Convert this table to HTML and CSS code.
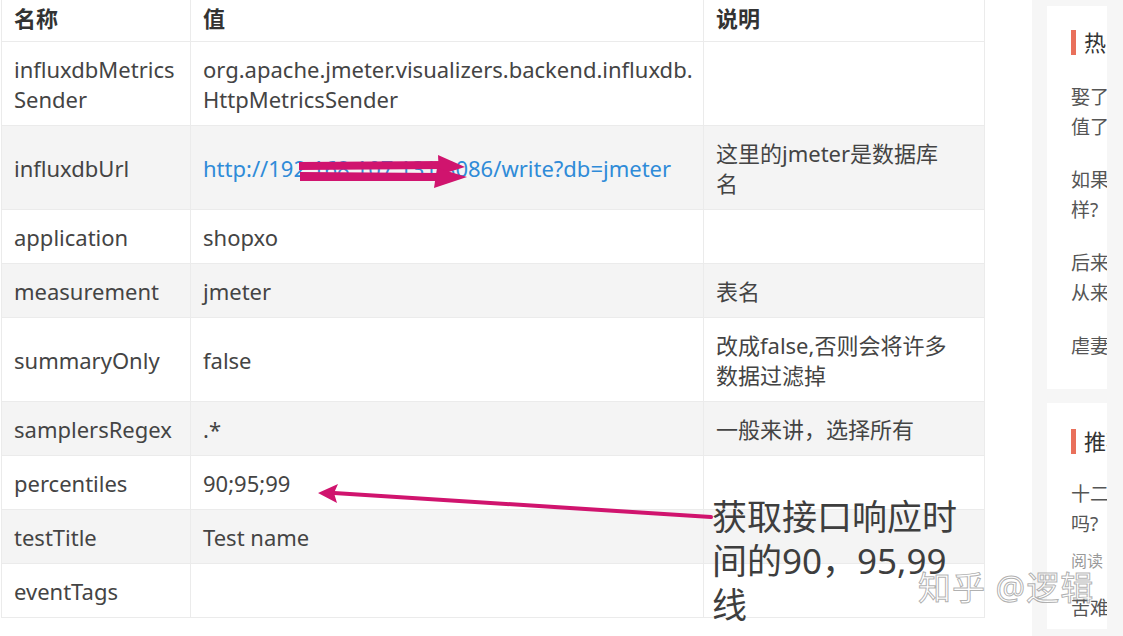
FILE: index.html
```html
<!DOCTYPE html>
<html lang="zh-CN">
<head>
<meta charset="utf-8">
<title>Backend Listener 参数</title>
<link rel="stylesheet" href="styles.css">
</head>
<body>
<div class="page">
  <main class="main">
    <table class="tbl">
      <colgroup><col class="c1"><col class="c2"><col class="c3"></colgroup>
      <thead>
        <tr><th>名称</th><th>值</th><th>说明</th></tr>
      </thead>
      <tbody>
        <tr><td>influxdbMetrics<br>Sender</td><td>org.apache.jmeter.visualizers.backend.influxdb.<br>HttpMetricsSender</td><td></td></tr>
        <tr><td>influxdbUrl</td><td><a class="link" href="#">http://192.168.107.131:8086/write?db=jmeter</a></td><td>这里的jmeter是数据库<br>名</td></tr>
        <tr><td>application</td><td>shopxo</td><td></td></tr>
        <tr><td>measurement</td><td>jmeter</td><td>表名</td></tr>
        <tr><td>summaryOnly</td><td>false</td><td>改成false,否则会将许多<br>数据过滤掉</td></tr>
        <tr><td>samplersRegex</td><td>.*</td><td>一般来讲，选择所有</td></tr>
        <tr><td>percentiles</td><td>90;95;99</td><td></td></tr>
        <tr><td>testTitle</td><td>Test name</td><td></td></tr>
        <tr><td>eventTags</td><td></td><td></td></tr>
      </tbody>
    </table>
    <svg class="marks" width="1032" height="636" viewBox="0 0 1032 636">
      <g fill="#d0146e">
        <polygon points="299,162 444,161 444,169 299,170"/>
        <polygon points="300,172 442,173 442,181 300,181"/>
        <polygon points="438,155 465,167 439,175"/>
        <polygon points="437,168 467,177 434,188"/>
        <polygon points="318,493 338,484 334,493 337,503"/>
      </g>
      <line x1="334" y1="493" x2="711" y2="517" stroke="#d0146e" stroke-width="4" stroke-linecap="round"/>
    </svg>
    <div class="note">获取接口响应时<br>间的90，95,99<br>线</div>
  </main>
  <aside class="side">
    <section class="card card-hot">
      <h3 class="card-title"><span class="bar"></span>热门内容</h3>
      <p class="item first">娶了<br>值了</p>
      <p class="item">如果<br>样?</p>
      <p class="item">后来<br>从来</p>
      <p class="item">虐妻</p>
    </section>
    <section class="card card-rec">
      <h3 class="card-title"><span class="bar"></span>推荐阅读</h3>
      <p class="item first">十二<br>吗?</p>
      <p class="meta">阅读</p>
      <p class="item next">苦难</p>
    </section>
  </aside>
  <div class="wm">知乎 @逻辑</div>
</div>
</body>
</html>
```

FILE: styles.css
```css
* { box-sizing: border-box; }
html, body { margin: 0; padding: 0; }
body {
  background: #f6f6f6;
  font-family: "Noto Sans", "Noto Sans CJK SC", sans-serif;
  color: #444;
}
.page {
  position: relative;
  display: flex;
  width: 1123px;
  height: 636px;
  overflow: hidden;
}
.main {
  position: relative;
  flex: none;
  width: 1032px;
  background: #fff;
  padding-left: 1px;
}
.tbl {
  border-collapse: collapse;
  table-layout: fixed;
  width: 983px;
  font-size: 22px;
  line-height: 30px;
}
.c1 { width: 189px; }
.c2 { width: 513px; }
.c3 { width: 281px; }
.tbl th, .tbl td {
  border: 1px solid #ebebeb;
  padding: 12px 12px 11px;
  text-align: left;
  vertical-align: middle;
  color: #444;
}
.tbl thead th {
  border-top: none;
  padding: 3px 12px 8px;
  font-weight: 700;
  color: #333;
}
.tbl tbody tr:nth-child(even) td { background: #f4f4f4; }
.link { color: #2f8bd8; text-decoration: none; }
.marks {
  position: absolute;
  left: 0;
  top: 0;
  pointer-events: none;
}
.note {
  position: absolute;
  left: 712px;
  top: 495px;
  font-size: 35px;
  line-height: 44px;
  color: #3e3e3e;
  white-space: nowrap;
}
.side {
  flex: none;
  width: 91px;
  padding-left: 15px;
}
.card {
  width: 60px;
  background: #fff;
  overflow: hidden;
  padding: 21px 0 0 24px;
  white-space: nowrap;
}
.card-hot { margin-top: 6px; height: 383px; }
.card-rec { margin-top: 14px; height: 226px; padding-top: 23px; }
.card-title {
  display: flex;
  align-items: center;
  gap: 8px;
  margin: 0;
  font-size: 22px;
  line-height: 30px;
  font-weight: 400;
  color: #333;
}
.bar {
  flex: none;
  width: 5px;
  height: 25px;
  background: #e9705b;
}
.item {
  margin: 23px 0 0;
  font-size: 19px;
  line-height: 30px;
  color: #555;
}
.item.first { margin-top: 25px; }
.card-rec .item.first { margin-top: 23px; }
.meta {
  margin: 10px 0 0;
  font-size: 16px;
  line-height: 24px;
  color: #999;
}
.item.next { margin-top: 20px; }
.wm {
  position: absolute;
  left: 918px;
  top: 568px;
  font-size: 33px;
  line-height: 40px;
  color: rgba(255, 255, 255, 0.75);
  -webkit-text-stroke: 1px rgba(110, 110, 110, 0.55);
  white-space: nowrap;
  letter-spacing: 1px;
}
```
